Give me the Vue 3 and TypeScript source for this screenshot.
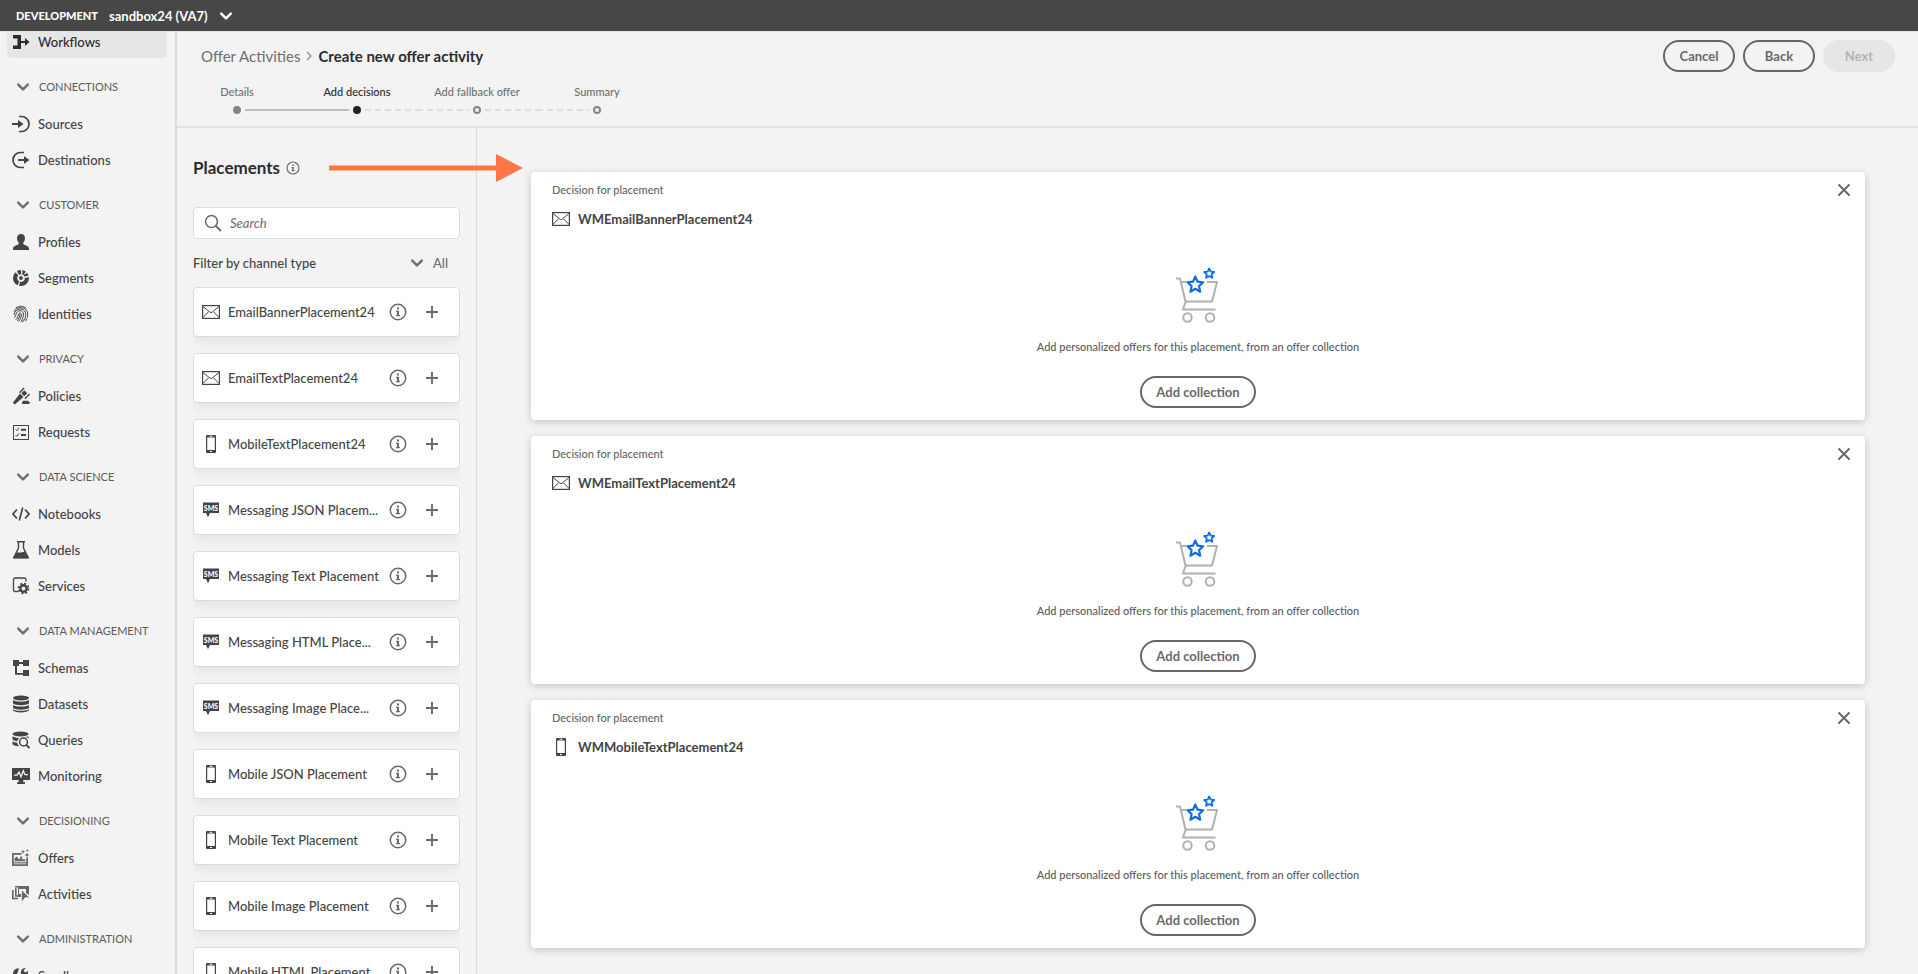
<script setup lang="ts">
import { ref } from 'vue'

interface NavItem {
  label: string
  icon: string
}

interface NavGroup {
  title: string
  items: NavItem[]
}

interface Placement {
  name: string
  icon: string
}

const groups: NavGroup[] = [
  {
    title: 'CONNECTIONS',
    items: [
      { label: 'Sources', icon: 'sources' },
      { label: 'Destinations', icon: 'destinations' },
    ],
  },
  {
    title: 'CUSTOMER',
    items: [
      { label: 'Profiles', icon: 'profiles' },
      { label: 'Segments', icon: 'segments' },
      { label: 'Identities', icon: 'identities' },
    ],
  },
  {
    title: 'PRIVACY',
    items: [
      { label: 'Policies', icon: 'policies' },
      { label: 'Requests', icon: 'requests' },
    ],
  },
  {
    title: 'DATA SCIENCE',
    items: [
      { label: 'Notebooks', icon: 'notebooks' },
      { label: 'Models', icon: 'models' },
      { label: 'Services', icon: 'services' },
    ],
  },
  {
    title: 'DATA MANAGEMENT',
    items: [
      { label: 'Schemas', icon: 'schemas' },
      { label: 'Datasets', icon: 'datasets' },
      { label: 'Queries', icon: 'queries' },
      { label: 'Monitoring', icon: 'monitoring' },
    ],
  },
  {
    title: 'DECISIONING',
    items: [
      { label: 'Offers', icon: 'offers' },
      { label: 'Activities', icon: 'activities' },
    ],
  },
  {
    title: 'ADMINISTRATION',
    items: [{ label: 'Sandboxes', icon: 'sandboxes' }],
  },
]

const steps = [
  { label: 'Details', state: 'done' },
  { label: 'Add decisions', state: 'current' },
  { label: 'Add fallback offer', state: 'todo' },
  { label: 'Summary', state: 'todo' },
]

const placements: Placement[] = [
  { name: 'EmailBannerPlacement24', icon: 'email' },
  { name: 'EmailTextPlacement24', icon: 'email' },
  { name: 'MobileTextPlacement24', icon: 'mobile' },
  { name: 'Messaging JSON Placem...', icon: 'sms' },
  { name: 'Messaging Text Placement', icon: 'sms' },
  { name: 'Messaging HTML Place...', icon: 'sms' },
  { name: 'Messaging Image Place...', icon: 'sms' },
  { name: 'Mobile JSON Placement', icon: 'mobile' },
  { name: 'Mobile Text Placement', icon: 'mobile' },
  { name: 'Mobile Image Placement', icon: 'mobile' },
  { name: 'Mobile HTML Placement', icon: 'mobile' },
]

const decisions = ref<Placement[]>([
  { name: 'WMEmailBannerPlacement24', icon: 'email' },
  { name: 'WMEmailTextPlacement24', icon: 'email' },
  { name: 'WMMobileTextPlacement24', icon: 'mobile' },
])

const search = ref('')

function addDecision(placement: Placement): void {
  decisions.value.push({ ...placement })
}

function removeDecision(index: number): void {
  decisions.value.splice(index, 1)
}
</script>

<template>
  <div class="app">
    <svg class="sprite" aria-hidden="true">
      <symbol id="i-chevron" viewBox="0 0 10 10">
        <path d="M1 3l4 4 4-4" fill="none" stroke="currentColor" stroke-width="2" stroke-linecap="round" stroke-linejoin="round" />
      </symbol>
      <symbol id="i-workflows" viewBox="0 0 18 18">
        <path d="M1 2h8v5.900h4V5l4.500 4-4.500 4v-3.100H9V16H1v-3.500h4.500v-7H1z" fill="currentColor" />
      </symbol>
      <symbol id="i-sources" viewBox="0 0 18 18">
        <path d="M7 1.500h2.500a7.500 7.500 0 0 1 0 15H7" fill="none" stroke="currentColor" stroke-width="1.700" />
        <path d="M0 8h6V5l5.500 4L6 13v-3H0z" fill="currentColor" />
      </symbol>
      <symbol id="i-destinations" viewBox="0 0 18 18">
        <path d="M12 1.500H8.500a7.500 7.500 0 0 0 0 15H12" fill="none" stroke="currentColor" stroke-width="1.700" />
        <path d="M6 8h6V5l5.500 4-5.500 4v-3H6z" fill="currentColor" />
      </symbol>
      <symbol id="i-profiles" viewBox="0 0 18 18">
        <path d="M9 1c2.700 0 4 1.900 4 4.300 0 1.700-.7 3.300-1.700 4.200v1.200c0 .5.300.8.900 1C15 12.500 17 13.500 17 15.500V17H1v-1.500c0-2 2-3 4.800-3.800.6-.2.900-.5.900-1V9.500C5.700 8.600 5 7 5 5.300 5 2.900 6.300 1 9 1z" fill="currentColor" />
      </symbol>
      <symbol id="i-segments" viewBox="0 0 18 18">
        <circle cx="9" cy="9" r="5.900" fill="none" stroke="currentColor" stroke-width="4.200" stroke-dasharray="10.500 1.200 11 1.200 12 1.170" />
        <circle cx="9" cy="9" r="1.900" fill="currentColor" />
        <path d="M9.700 0v5M17.500 7l-5 1.400M12.500 5l3-2.500" stroke="#f3f3f3" stroke-width="1.300" fill="none" />
      </symbol>
      <symbol id="i-identities" viewBox="0 0 18 18">
        <g fill="none" stroke="currentColor" stroke-width="1" stroke-linecap="round">
          <path d="M4 2.700C7 .6 11.500.6 14 3.200M2 6.300C4.500 1.500 12.500 1.200 15.200 6.500c.7 1.800.6 4 .2 6" />
          <path d="M2 9.700C2.800 3.300 11.500 1.800 13.400 7.500c.7 2.500.1 5-.9 7.500" />
          <path d="M2.500 12.500C4.300 11 3.600 8.500 5.500 6.700c2-1.800 5-1 5.800 1.300.6 2.800-.7 6-2 8.500" />
          <path d="M4 14.500c2.400-2 1.800-4.500 3-6 .9-.9 2.300-.4 2.400.9.100 2.500-1.300 5-2.700 6.800M7.900 9.500c0 2-1 4.300-2.400 6M14.600 14l-.7 1.800M11.400 15l-.7 1.700" />
        </g>
      </symbol>
      <symbol id="i-policies" viewBox="0 0 18 18">
        <path d="M8 6.500l3.500 3.500-8.700 7.400-2-1.700zM7 5.200L11.600.6l1 1L8 6.200zM12.400 11.200l4.700-4.700.9.900-4.600 4.800zM9.300 6.200l3-2.900 2.900 2.900-3 3z" fill="currentColor" />
        <path d="M10 15.300l1-1.500h5l1.500 1.500V17H10z" fill="currentColor" />
      </symbol>
      <symbol id="i-requests" viewBox="0 0 18 18">
        <rect x="1.500" y="2.500" width="15" height="14" fill="none" stroke="currentColor" />
        <path d="M3.500 6.500l1.300 1.300 2.400-3M3.500 12l1.300 1.300 2.400-3" fill="none" stroke="currentColor" />
        <path d="M9 5.700h5v2H9zM9 11h5v2H9z" fill="currentColor" />
      </symbol>
      <symbol id="i-notebooks" viewBox="0 0 18 18">
        <path d="M5 4.500L1 9l4 4.500M13 4.500L17 9l-4 4.500M10.700 2.500l-3.400 13" fill="none" stroke="currentColor" stroke-width="1.700" />
      </symbol>
      <symbol id="i-models" viewBox="0 0 18 18">
        <path d="M5 .7h8M6.500 1v6L1.800 16.500h14.400L11.500 7V1" fill="none" stroke="currentColor" stroke-width="1.400" />
        <path d="M4.300 11.500c3-.2 5.500.5 8.500-1.300l3.900 7.300H1.300z" fill="currentColor" />
      </symbol>
      <symbol id="i-services" viewBox="0 0 18 18">
        <path d="M6 14.500H3A1.500 1.500 0 0 1 1.500 13V2.500A1.500 1.500 0 0 1 3 1h9.500A1.500 1.500 0 0 1 14 2.500v2" fill="none" stroke="currentColor" stroke-width="1.300" />
        <circle cx="11.500" cy="11.500" r="3.200" fill="none" stroke="currentColor" stroke-width="2.400" />
        <circle cx="11.500" cy="11.500" r="5" fill="none" stroke="currentColor" stroke-width="1.700" stroke-dasharray="2 1.927" />
      </symbol>
      <symbol id="i-schemas" viewBox="0 0 18 18">
        <path d="M1 1h6v2h4V1h6v6h-6V5H7v2H5v7h6v-3h6v6h-6v-1.200H3V7H1z" fill="currentColor" />
      </symbol>
      <symbol id="i-datasets" viewBox="0 0 18 18">
        <ellipse cx="9" cy="3" rx="8" ry="2.600" fill="currentColor" />
        <path d="M1 5c3 2.200 13 2.200 16 0v3.600c-3 2.300-13 2.300-16 0zM1 9.900c3 2.200 13 2.200 16 0v3c-3 2.300-13 2.300-16 0zM1 14.200c3 2 13 2 16 0v1.300c-3 2.600-13 2.600-16 0z" fill="currentColor" />
      </symbol>
      <symbol id="i-queries" viewBox="0 0 18 18">
        <ellipse cx="8.500" cy="3" rx="8" ry="2.500" fill="currentColor" />
        <path d="M.5 5.200c2.500 1.500 5 1.800 7 1.700C6 8 5.300 9.300 5.200 10.300 3 10 1.300 9.400.5 8.500zM.5 10.200c1.200.8 3 1.300 4.800 1.500.2 1.300.9 2.500 2 3.500-3 0-5.800-.8-6.800-2zM16.500 5.200v2.500c-.8-.9-2-1.500-3.500-1.600 1.300-.2 2.600-.5 3.500-.9z" fill="currentColor" />
        <circle cx="11.500" cy="11" r="3.900" fill="none" stroke="currentColor" stroke-width="1.500" />
        <path d="M14.300 13.800l3.200 3.200" stroke="currentColor" stroke-width="1.900" />
      </symbol>
      <symbol id="i-monitoring" viewBox="0 0 18 18">
        <path d="M0 1h18v12h-6.700v2.200H13V17H5v-1.800h1.700V13H0z" fill="currentColor" />
        <path d="M2 8.200h3l2-3 2 4.500 2.300-6 1.700 4h3" fill="none" stroke="#f3f3f3" stroke-width="1.300" />
      </symbol>
      <symbol id="i-offers" viewBox="0 0 18 18">
        <path d="M0 4h9.500v1.700H1.700v7.600h12.600V8.500H16V17H0z" fill="currentColor" />
        <path d="M2.500 12.300V9.500l2.200-2 2 2.500h1.500V7.500h2v2.800h3v2z" fill="currentColor" />
        <path d="M1.500 14.800h13" stroke="#f3f3f3" stroke-width=".8" />
        <path d="M11 .5l.6 1.700 1.600.6-1.600.6L11 5l-.6-1.600-1.600-.6 1.600-.6zM15 3.500l.7 1.800 1.800.7-1.800.7L15 8.500l-.7-1.800-1.800-.7 1.800-.7zM15.300 0l.4 1.100 1.100.4-1.100.4-.4 1.100-.4-1.100-1.100-.4 1.100-.4z" fill="currentColor" />
      </symbol>
      <symbol id="i-activities" viewBox="0 0 18 18">
        <path d="M.8 5v8.500H6M3.800 3v8H9" fill="none" stroke="currentColor" stroke-width="1.600" />
        <path d="M3 1h14v9l-3-2V4H7v5h2v3H6V2.500H3z" fill="currentColor" />
        <path d="M9.500 5l8.200 7.600h-4.400L9.500 17z" fill="currentColor" stroke="#f3f3f3" stroke-width=".7" />
      </symbol>
      <symbol id="i-sandboxes" viewBox="0 0 18 18">
        <path d="M9 7c-.8-3 1-6.500 4.800-6L11.500 3.500 13 5.500l3-1.500c.6 3-1.500 5.500-4.800 4.800L4 17l-3-3z" fill="currentColor" />
        <path d="M7 1.500C4 1 1 3 1 7v4l4-4z" fill="currentColor" />
      </symbol>
      <symbol id="i-email" viewBox="0 0 18 18">
        <rect x=".6" y="2.600" width="16.800" height="12.800" fill="none" stroke="currentColor" stroke-width="1.200" />
        <path d="M1 3.500l7 5.700c.7.500 1.300.5 2 0l7-5.700M1 14.500l5.500-5.700M17 14.500l-5.500-5.700" fill="none" stroke="currentColor" stroke-width="1" />
      </symbol>
      <symbol id="i-mobile" viewBox="0 0 18 18">
        <path d="M5 0h8a1 1 0 0 1 1 1v16a1 1 0 0 1-1 1H5a1 1 0 0 1-1-1V1a1 1 0 0 1 1-1zm.2 2.600v12.300h7.600V2.600zM7.600.8v.9h2.800V.8zM8 16v1.100h2V16z" fill="currentColor" fill-rule="evenodd" />
      </symbol>
      <symbol id="i-info" viewBox="0 0 18 18">
        <circle cx="9" cy="9" r="7.700" fill="none" stroke="currentColor" stroke-width="1.500" />
        <path d="M8 4.500h2v2H8zM7 7.700h3v4.300h1v1.300H7V12h1V9H7z" fill="currentColor" />
      </symbol>
      <symbol id="i-plus" viewBox="0 0 18 18">
        <path d="M9 3v12M3 9h12" stroke="currentColor" stroke-width="1.900" />
      </symbol>
      <symbol id="i-close" viewBox="0 0 18 18">
        <path d="M4 4l10 10M14 4L4 14" stroke="currentColor" stroke-width="2" stroke-linecap="round" />
      </symbol>
      <symbol id="i-search" viewBox="0 0 18 18">
        <circle cx="7.500" cy="7.500" r="5.900" fill="none" stroke="currentColor" stroke-width="1.500" />
        <path d="M12 12l4.500 4.500" stroke="currentColor" stroke-width="1.800" stroke-linecap="round" />
      </symbol>
    </svg>

    <header class="topbar">
      <span class="env">DEVELOPMENT</span>
      <button class="sandbox" type="button">
        sandbox24 (VA7)
        <svg class="chevron"><use href="#i-chevron" /></svg>
      </button>
    </header>

    <div class="body">
      <nav class="sidebar" aria-label="Main">
        <div class="scroller">
          <a class="nav-item active" href="#workflows">
            <svg class="icon"><use href="#i-workflows" /></svg>
            Workflows
          </a>
          <section v-for="group in groups" :key="group.title">
            <h2 class="group-title">
              <svg class="chevron"><use href="#i-chevron" /></svg>
              {{ group.title }}
            </h2>
            <div class="group-items">
              <a v-for="item in group.items" :key="item.label" class="nav-item" :href="'#' + item.icon">
                <svg class="icon" :class="{ light: group.title === 'DECISIONING' }"><use :href="'#i-' + item.icon" /></svg>
                {{ item.label }}
              </a>
            </div>
          </section>
        </div>
      </nav>

      <main class="main">
        <div class="page-header">
          <div class="title-row">
            <a class="crumb" href="#offer-activities">Offer Activities</a>
            <svg class="separator" viewBox="0 0 6 10" aria-hidden="true">
              <path d="M1 1l4 4-4 4" fill="none" stroke="currentColor" stroke-width="1.500" />
            </svg>
            <h1 class="page-title">Create new offer activity</h1>
            <div class="actions">
              <button class="btn" type="button">Cancel</button>
              <button class="btn" type="button">Back</button>
              <button class="btn" type="button" disabled>Next</button>
            </div>
          </div>
          <ol class="steps">
            <li v-for="step in steps" :key="step.label" class="step" :class="step.state">
              <span class="step-label">{{ step.label }}</span>
              <span class="track"><span class="line"></span><span class="dot"></span><span class="line after"></span></span>
            </li>
          </ol>
        </div>

        <div class="content">
          <aside class="panel">
            <h2 class="panel-title">
              Placements
              <svg class="icon tiny"><use href="#i-info" /></svg>
            </h2>
            <svg class="arrow" viewBox="0 0 194 28" aria-hidden="true">
              <path d="M0 11.500h167V0l27 14-27 14V16.500H0z" fill="#ff7646" />
            </svg>
            <label class="search">
              <svg class="icon gray"><use href="#i-search" /></svg>
              <input v-model="search" type="search" placeholder="Search" aria-label="Search placements" />
            </label>
            <div class="filter">
              <span>Filter by channel type</span>
              <button class="filter-button" type="button">
                <svg class="chevron"><use href="#i-chevron" /></svg>
                All
              </button>
            </div>
            <ul class="placements">
              <li v-for="placement in placements" :key="placement.name" class="placement">
                <svg v-if="placement.icon === 'sms'" class="icon" viewBox="0 0 18 18">
                  <path d="M1 1.500h16V12H8l-2 4.300L4 12H1z" fill="currentColor" />
                  <text x="9" y="9.500" text-anchor="middle" class="sms-text">SMS</text>
                </svg>
                <svg v-else class="icon"><use :href="'#i-' + placement.icon" /></svg>
                <span class="placement-name">{{ placement.name }}</span>
                <button class="icon-button" type="button" aria-label="Placement details">
                  <svg class="icon gray"><use href="#i-info" /></svg>
                </button>
                <button class="icon-button plus" type="button" aria-label="Add placement" @click="addDecision(placement)">
                  <svg class="icon gray"><use href="#i-plus" /></svg>
                </button>
              </li>
            </ul>
          </aside>

          <div class="decisions">
            <article v-for="(decision, index) in decisions" :key="index" class="decision">
              <div class="decision-top">
                <span>Decision for placement</span>
                <button class="icon-button" type="button" aria-label="Remove" @click="removeDecision(index)">
                  <svg class="icon gray"><use href="#i-close" /></svg>
                </button>
              </div>
              <h3 class="decision-title">
                <svg class="icon"><use :href="'#i-' + decision.icon" /></svg>
                {{ decision.name }}
              </h3>
              <div class="empty">
                <svg class="cart" viewBox="1 0 44 56" aria-hidden="true">
                  <g fill="none" stroke="#b1b1b1" stroke-width="2" stroke-linejoin="round">
                    <path d="M1 11.500h4l5.500 23H37l5-19.500H32M11 15H6M10.500 35L8 42.500h32.500" />
                    <circle cx="12.500" cy="50.500" r="4.200" />
                    <circle cx="35" cy="50.500" r="4.200" />
                  </g>
                  <g fill="#fff" stroke="#0b6fe8" stroke-linejoin="round">
                    <path d="M20.300 9.500l2.300 5.200 5.600.6-4.200 3.800 1.200 5.600-4.900-2.900-4.900 2.900 1.200-5.600-4.200-3.800 5.600-.6z" stroke-width="2.200" />
                    <path d="M34.200 1.500l1.500 3.100 3.500.4-2.600 2.400.7 3.400-3.100-1.700-3.100 1.700.7-3.400L29.200 5l3.500-.4z" stroke-width="1.800" />
                  </g>
                </svg>
                <p class="hint">Add personalized offers for this placement, from an offer collection</p>
                <button class="btn wide" type="button">Add collection</button>
              </div>
            </article>
          </div>
        </div>
      </main>
    </div>
  </div>
</template>

<style>
body {
  margin: 0;
}
</style>

<style scoped>
.app {
  display: flex;
  flex-direction: column;
  height: 100vh;
  overflow: hidden;
  background: #f3f3f3;
  color: #444;
  font: 500 13px/20px Lato, 'Noto Sans', sans-serif;
}

* {
  box-sizing: border-box;
}

h1,
h2,
h3,
p,
ul,
ol {
  margin: 0;
  padding: 0;
  list-style: none;
}

a {
  color: inherit;
  text-decoration: none;
}

button {
  padding: 0;
  border: 0;
  background: none;
  color: inherit;
  font: inherit;
  cursor: pointer;
}

.sprite {
  display: none;
}

.icon {
  display: block;
  flex: none;
  width: 18px;
  height: 18px;
}

.icon.gray {
  color: #696969;
}

.icon.light {
  color: #666;
}

.icon.tiny {
  width: 14px;
  height: 14px;
  color: #6e6e6e;
}

.chevron {
  flex: none;
  width: 12px;
  height: 12px;
  color: #6e6e6e;
}

.topbar {
  position: relative;
  z-index: 1;
  display: flex;
  flex: none;
  align-items: center;
  gap: 11px;
  height: 31px;
  padding: 0 16px;
  background: #474747;
  box-shadow: 0 1px 0 #e1e1e1;
  color: #fff;
}

.env {
  font-size: 11px;
  font-weight: 900;
}

.sandbox {
  display: flex;
  align-items: center;
  gap: 12px;
  font-weight: 700;
}

.sandbox .chevron {
  color: #fff;
}

.body {
  display: flex;
  flex: 1;
  min-height: 0;
}

.sidebar {
  flex: none;
  width: 177px;
  overflow: hidden;
  border-right: 2px solid #dcdcdc;
}

.scroller {
  margin-top: -5px;
  padding: 0 8px 0 7px;
}

.nav-item {
  display: flex;
  align-items: center;
  gap: 8px;
  height: 32px;
  padding: 0 5px;
  border-radius: 4px;
}

.nav-item.active {
  background: #e6e6e6;
  color: #2c2c2c;
}

.group-title {
  display: flex;
  align-items: center;
  gap: 10px;
  height: 18px;
  margin: 20px 0 12px;
  padding-left: 10px;
  color: #5a5a5a;
  font-size: 11px;
  font-weight: 400;
}

.group-items {
  display: flex;
  flex-direction: column;
  gap: 4px;
}

.main {
  display: flex;
  flex: 1;
  flex-direction: column;
  min-width: 0;
}

.page-header {
  flex: none;
  padding: 9px 23px 12px 0;
  border-bottom: 2px solid #e4e4e4;
}

.title-row {
  display: flex;
  align-items: center;
  padding-left: 24px;
  font-size: 15px;
}

.crumb {
  color: #6e6e6e;
  font-weight: 400;
}

.separator {
  width: 6px;
  height: 10px;
  margin: 0 6px;
  color: #9a9a9a;
}

.page-title {
  color: #2c2c2c;
  font-size: 15px;
  font-weight: 700;
}

.actions {
  display: flex;
  gap: 8px;
  margin-left: auto;
}

.btn {
  width: 72px;
  height: 32px;
  border: 2px solid #666;
  border-radius: 16px;
  color: #6a6a6a;
  font-size: 13px;
  font-weight: 700;
}

.btn.wide {
  width: 116px;
}

.btn:disabled {
  border-color: #e6e6e6;
  background: #e6e6e6;
  color: #b3b3b3;
}

.steps {
  display: flex;
  margin-top: 12px;
}

.step {
  width: 120px;
  color: #707070;
  font-size: 11px;
  line-height: 16px;
  text-align: center;
}

.step.current {
  color: #2c2c2c;
}

.step-label {
  display: block;
}

.track {
  display: flex;
  align-items: center;
  gap: 4px;
  height: 8px;
  margin-top: 6px;
}

.dot {
  flex: none;
  width: 8px;
  height: 8px;
  border: 2px solid #858585;
  border-radius: 50%;
}

.done .dot {
  background: #858585;
}

.current .dot {
  border-color: #222;
  background: #222;
}

.line {
  flex: 1;
  height: 2px;
  background: repeating-linear-gradient(90deg, #dcdcdc 0 6px, transparent 6px 10px);
}

.current .line,
.done .line {
  background: #bdbdbd;
}

.current .line.after {
  background: repeating-linear-gradient(90deg, #dcdcdc 0 6px, transparent 6px 10px);
}

.step:first-child .line:first-child,
.step:last-child .line.after {
  visibility: hidden;
}

.content {
  display: flex;
  flex: 1;
  min-height: 0;
}

.panel {
  position: relative;
  display: flex;
  flex: none;
  flex-direction: column;
  width: 300px;
  padding: 28px 16px 0;
  border-right: 1px solid #dcdcdc;
}

.panel-title {
  display: flex;
  align-items: center;
  gap: 6px;
  color: #2c2c2c;
  font-size: 17px;
  font-weight: 700;
  line-height: 24px;
}

.arrow {
  position: absolute;
  top: 26px;
  left: 152px;
  width: 194px;
  height: 28px;
}

.search {
  display: flex;
  flex: none;
  align-items: center;
  gap: 8px;
  height: 32px;
  margin-top: 27px;
  padding: 0 10px;
  border: 1px solid #dcdcdc;
  border-radius: 4px;
  background: #fff;
}

.search input {
  flex: 1;
  min-width: 0;
  padding: 0;
  border: 0;
  outline: 0;
  background: none;
  color: #4b4b4b;
  font: inherit;
}

.search input::placeholder {
  color: #757575;
  font-style: italic;
}

.filter {
  display: flex;
  flex: none;
  align-items: center;
  justify-content: space-between;
  height: 24px;
  margin: 12px 0;
  padding-right: 12px;
}

.filter-button {
  display: flex;
  align-items: center;
  gap: 10px;
  color: #6e6e6e;
}

.placements {
  display: flex;
  flex: 1;
  flex-direction: column;
  gap: 16px;
  min-height: 0;
  overflow: hidden;
}

.placement {
  display: flex;
  flex: none;
  align-items: center;
  height: 50px;
  padding: 0 18px 0 8px;
  border: 1px solid #dcdcdc;
  border-radius: 4px;
  background: #fff;
  box-shadow: 0 5px 12px rgba(0, 0, 0, 0.06);
}

.placement-name {
  flex: 1;
  padding-left: 8px;
  white-space: nowrap;
}

.plus {
  margin-left: 16px;
}

.sms-text {
  fill: #fff;
  font: 900 7px/7px Lato, sans-serif;
}

.decisions {
  display: flex;
  flex: 1;
  flex-direction: column;
  gap: 16px;
  min-width: 0;
  padding: 44px 53px 0 54px;
  overflow: hidden;
}

.decision {
  flex: none;
  padding: 9px 12px 12px 21px;
  border-radius: 4px;
  background: #fff;
  box-shadow: 0 2px 8px rgba(0, 0, 0, 0.2);
}

.decision-top {
  display: flex;
  align-items: center;
  justify-content: space-between;
  height: 18px;
  color: #666;
  font-size: 11px;
}

.decision-title {
  display: flex;
  align-items: center;
  gap: 8px;
  margin-top: 10px;
  font-size: 13px;
  font-weight: 700;
  line-height: 20px;
}

.empty {
  display: flex;
  flex-direction: column;
  align-items: center;
  padding: 38px 9px 0 0;
}

.cart {
  width: 44px;
  height: 56px;
}

.hint {
  margin: 16px 0 21px;
  color: #5c5c5c;
  font-size: 11px;
  line-height: 16px;
}
</style>
